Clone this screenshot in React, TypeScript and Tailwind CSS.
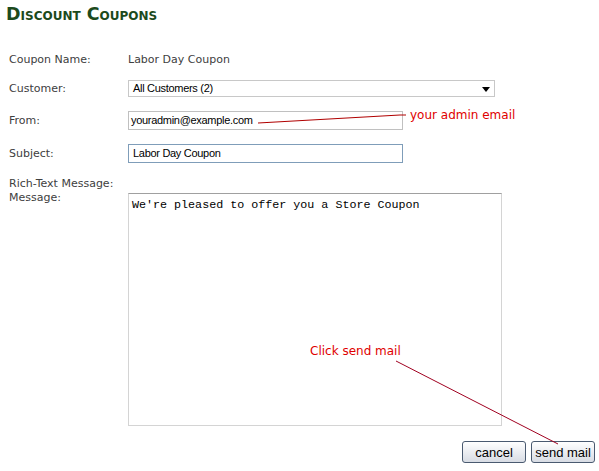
import React from "react";

export default function App() {
  const label = "w-[128px] pl-[9px] text-[11px] leading-[14px] text-[#404040] shrink-0";
  const inputFont = { fontFamily: '"Liberation Sans", Arial, sans-serif' };
  return (
    <div className="relative w-[599px] h-[471px] bg-white overflow-hidden" style={{ fontFamily: '"DejaVu Sans", Verdana, sans-serif' }}>
      <div className="flex flex-col">
        <div className="h-[30px] pt-[4px] pl-[6px]">
          <h1 className="text-[17.5px] leading-[20px] font-bold text-[#1c4a1c] [font-variant:small-caps]">Discount Coupons</h1>
        </div>
        <div className="mt-[23px] flex items-center h-[14px]">
          <div className={label}>Coupon Name:</div>
          <div className="text-[11px] leading-[14px] text-[#404040]">Labor Day Coupon</div>
        </div>
        <div className="mt-[13px] flex items-center h-[17px]">
          <div className={label}>Customer:</div>
          <div className="relative w-[367px] h-[17px] border border-[#c8c8c8] flex items-center pl-[4px] text-[11px] tracking-[-0.3px] text-black" style={inputFont}>
            All Customers (2)
            <svg className="absolute right-[4px] top-[6px]" width="8" height="5" viewBox="0 0 8 5"><polygon points="0,0 8,0 4,5" fill="#000" /></svg>
          </div>
        </div>
        <div className="mt-[14px] flex items-center h-[19px]">
          <div className={label}>From:</div>
          <div className="w-[275px] h-[19px] border border-[#c0c0c0] flex items-center pl-[2px] text-[11px] tracking-[-0.3px] text-black" style={inputFont}>
            youradmin@example.com
          </div>
        </div>
        <div className="mt-[14px] flex items-center h-[19px]">
          <div className={label}>Subject:</div>
          <div className="w-[275px] h-[19px] border border-[#7f9db9] flex items-center pl-[4px] text-[11px] tracking-[-0.3px] text-black" style={inputFont}>
            Labor Day Coupon
          </div>
        </div>
        <div className="mt-[14px] flex">
          <div className={label}>
            <div>Rich-Text Message:</div>
            <div>Message:</div>
          </div>
          <div className="mt-[16px] w-[374px] h-[233px] border border-[#d4d4d4] border-t-[#a0a0a0] pl-[3px] pt-[4px] text-[11.7px] leading-[14px] text-black" style={{ fontFamily: '"Liberation Mono", "Courier New", monospace' }}>
            We're pleased to offer you a Store Coupon
          </div>
        </div>
        <div className="mt-[15px] flex justify-end gap-[5px] pr-[4px]" style={inputFont}>
          <button className="w-[64px] h-[22px] rounded-[3px] border border-[#4a5a70] bg-gradient-to-b from-white to-[#d8dce4] text-[13px] text-black leading-none">cancel</button>
          <button className="w-[64px] h-[22px] rounded-[3px] border border-[#4a5a70] bg-gradient-to-b from-white to-[#d8dce4] text-[13px] text-black leading-none">send mail</button>
        </div>
      </div>

      <svg className="absolute left-0 top-0 pointer-events-none" width="599" height="471">
        <polyline points="258,123 400,115 406,115" fill="none" stroke="#b00000" strokeWidth="1.2" />
        <line x1="396" y1="361" x2="558" y2="444" stroke="#a00020" strokeWidth="1" />
      </svg>
      <div className="absolute left-[410px] top-[108px] text-[12px] leading-[15px] text-[#e00000]">your admin email</div>
      <div className="absolute left-[310px] top-[344px] text-[12px] leading-[15px] text-[#e00000]">Click send mail</div>
    </div>
  );
}
